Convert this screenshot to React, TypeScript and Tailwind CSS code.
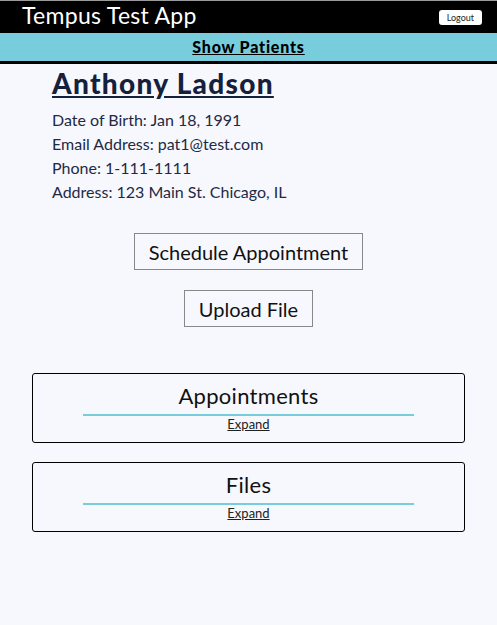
import React from "react";

const patient = {
    name: "Anthony Ladson",
    dob: "Jan 18, 1991",
    email: "pat1@test.com",
    phone: "1-111-1111",
    address: "123 Main St. Chicago, IL",
};

function Section({ title }: { title: string }) {
    return (
        <div className="mx-[32px] border border-black rounded-[3px] flex flex-col items-center pt-[8px] pb-[10px]">
            <h2 className="text-[22px] leading-[28px] text-[#111] tracking-[0.3px]">{title}</h2>
            <div className="w-[331px] h-[2px] bg-[#77cddb] mt-[4px]" />
            <button className="text-[13px] leading-[16px] underline text-[#222]">Expand</button>
        </div>
    );
}

export default function App() {
    return (
        <div className="min-h-screen bg-[#f7f8fd] font-['Lato','Open_Sans',sans-serif]">
            <header className="h-[33px] bg-black border-t border-[#9a9a9a] flex items-center justify-between pl-[22px] pr-[15px]">
                <span className="text-white text-[23px] leading-none tracking-[0.3px] -mt-[4px]">Tempus Test App</span>
                <button className="bg-white rounded-[3px] text-[9px] leading-none px-[8px] h-[15px] text-[#222] mt-[1px]">Logout</button>
            </header>
            <nav className="h-[31px] bg-[#77cddb] border-b-[3px] border-black flex items-center justify-center">
                <a className="text-[16px] font-black underline text-black tracking-[0.8px]">Show Patients</a>
            </nav>

            <section className="pl-[52px] pt-[3px]">
                <h1 className="text-[28px] leading-[32px] font-black underline text-[#14213d] tracking-[1.3px]">{patient.name}</h1>
                <div className="mt-[9px] text-[16px] leading-[24px] text-[#1e2a45]">
                    <p>Date of Birth: {patient.dob}</p>
                    <p>Email Address: {patient.email}</p>
                    <p>Phone: {patient.phone}</p>
                    <p>Address: {patient.address}</p>
                </div>
            </section>

            <div className="flex flex-col items-center gap-[20px] mt-[29px]">
                <button className="border border-[#888] px-[14px] h-[37px] text-[20px] text-[#111]">Schedule Appointment</button>
                <button className="border border-[#888] px-[14px] h-[37px] text-[20px] text-[#111]">Upload File</button>
            </div>

            <div className="flex flex-col gap-[19px] mt-[46px]">
                <Section title="Appointments" />
                <Section title="Files" />
            </div>
        </div>
    );
}
